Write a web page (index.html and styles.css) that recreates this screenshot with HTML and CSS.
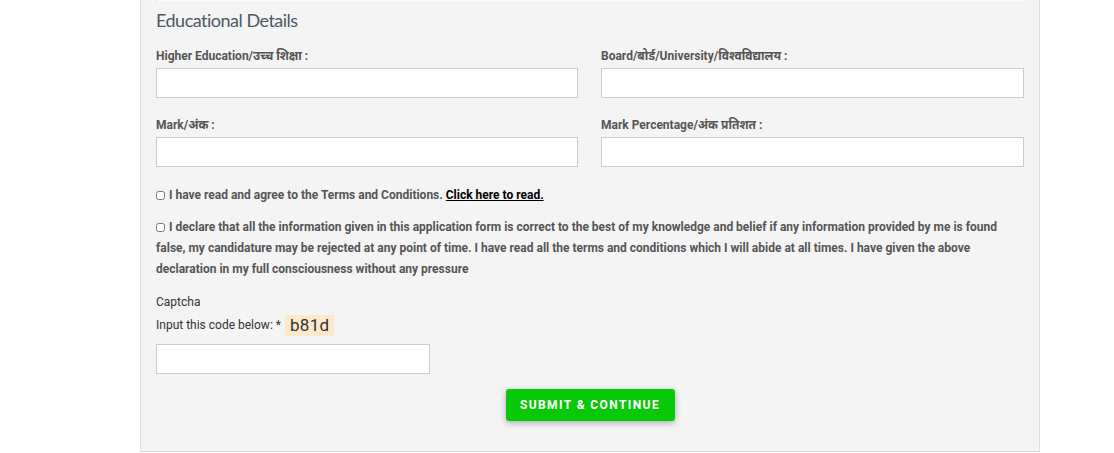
FILE: index.html
```html
<!DOCTYPE html>
<html lang="en">
<head>
<meta charset="utf-8">
<title>Educational Details</title>
<link rel="stylesheet" href="styles.css">
</head>
<body>
<div class="panel">
  <div class="divider"></div>
  <h3 class="section-title">Educational Details</h3>
  <div class="grid">
    <div class="field">
      <label class="field-label">Higher Education/उच्च शिक्षा :</label>
      <input class="text-input" type="text">
    </div>
    <div class="field">
      <label class="field-label">Board/बोर्ड/University/विश्वविद्यालय :</label>
      <input class="text-input" type="text">
    </div>
    <div class="field">
      <label class="field-label">Mark/अंक :</label>
      <input class="text-input" type="text">
    </div>
    <div class="field">
      <label class="field-label">Mark Percentage/अंक प्रतिशत :</label>
      <input class="text-input" type="text">
    </div>
  </div>
  <p class="check-line"><input class="check" type="checkbox"> I have read and agree to the Terms and Conditions. <a class="terms-link" href="#">Click here to read.</a></p>
  <p class="declaration"><input class="check" type="checkbox"> I declare that all the information given in this application form is correct to the best of my knowledge and belief if any information provided by me is found false, my candidature may be rejected at any point of time. I have read all the terms and conditions which I will abide at all times. I have given the above declaration in my full consciousness without any pressure</p>
  <div class="captcha">
    <div class="captcha-title">Captcha</div>
    <div class="captcha-row"><span>Input this code below: *</span><span class="captcha-code">b81d</span></div>
    <input class="text-input captcha-input" type="text">
  </div>
  <div class="actions">
    <button class="submit-btn" type="button">Submit &amp; Continue</button>
  </div>
</div>
</body>
</html>
```
FILE: styles.css
```css
html, body {
  margin: 0;
  padding: 0;
  background: #fff;
}
body {
  font-family: Roboto, "Noto Sans", "Noto Sans Devanagari", sans-serif;
  height: 453px;
  overflow: hidden;
}
.panel {
  margin-left: 140px;
  width: 900px;
  box-sizing: border-box;
  background: #f4f4f4;
  border: 1px solid #dcdcdc;
  border-top: 0;
  padding: 0 15px 30px;
}
.divider {
  height: 1px;
  background: #fafafa;
  border-left: 1px solid #d8d8d8;
}
.section-title {
  margin: 8px 0 0;
  font-family: Lato, "Open Sans", sans-serif;
  font-weight: 400;
  font-size: 18px;
  letter-spacing: -0.5px;
  line-height: 22px;
  color: #4b5866;
}
.grid {
  display: grid;
  grid-template-columns: 422px 423px;
  column-gap: 23px;
  row-gap: 20px;
  margin-top: 18px;
}
.field {
  display: flex;
  flex-direction: column;
}
.field-label {
  font-size: 12px;
  font-weight: 700;
  line-height: 15px;
  color: #555;
  margin-bottom: 4px;
}
.text-input {
  box-sizing: border-box;
  height: 30px;
  width: 100%;
  margin: 0;
  border: 1px solid #ccc;
  background: #fff;
  outline: none;
}
.check {
  width: 9px;
  height: 9px;
  margin: 0 1px 0 0;
  vertical-align: -0.5px;
}
.check-line {
  margin: 18px 0 0;
  font-size: 12px;
  font-weight: 700;
  line-height: 21px;
  color: #555;
}
.terms-link {
  color: #000;
  text-decoration: underline;
}
.declaration {
  margin: 11px 0 0;
  font-size: 12px;
  font-weight: 700;
  line-height: 21px;
  color: #555;
}
.captcha {
  margin-top: 15px;
  font-size: 12px;
  color: #333;
}
.captcha-title {
  line-height: 15px;
}
.captcha-row {
  display: flex;
  align-items: center;
  gap: 4px;
  margin-top: 4px;
  height: 22px;
}
.captcha-code {
  background: #fde8cc;
  font-size: 17px;
  line-height: 21px;
  padding: 0 5px;
  letter-spacing: 0.3px;
  color: #333;
}
.captcha-input {
  width: 274px;
  margin-top: 8px;
  display: block;
}
.actions {
  display: flex;
  justify-content: center;
  margin-top: 15px;
}
.submit-btn {
  width: 169px;
  height: 32px;
  border: 0;
  border-radius: 3px;
  background: #08c808;
  color: #fff;
  font-family: Roboto, sans-serif;
  font-weight: 700;
  font-size: 12px;
  letter-spacing: 1.4px;
  text-transform: uppercase;
  box-shadow: 0 2px 6px rgba(0,0,0,0.3);
}
```
